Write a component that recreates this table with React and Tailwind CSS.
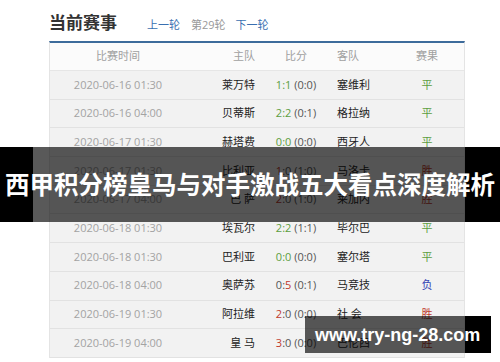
import React from "react";

const rows = [
  { time: "2020-06-16 01:30", home: "莱万特", s: ["1", "1"], half: "(0:0)", away: "塞维利", res: "平" },
  { time: "2020-06-16 04:00", home: "贝蒂斯", s: ["2", "2"], half: "(0:1)", away: "格拉纳", res: "平" },
  { time: "2020-06-17 01:30", home: "赫塔费", s: ["0", "0"], half: "(0:0)", away: "西牙人", res: "平" },
  { time: "2020-06-17 01:30", home: "比利亚", s: ["1", "0"], half: "(1:0)", away: "马洛卡", res: "胜" },
  { time: "2020-06-17 04:00", home: "巴 萨", s: ["2", "0"], half: "(1:0)", away: "莱加内", res: "胜" },
  { time: "2020-06-18 01:30", home: "埃瓦尔", s: ["2", "2"], half: "(1:1)", away: "毕尔巴", res: "平" },
  { time: "2020-06-18 01:30", home: "巴利亚", s: ["0", "0"], half: "(0:0)", away: "塞尔塔", res: "平" },
  { time: "2020-06-18 04:00", home: "奥萨苏", s: ["0", "5"], half: "(0:1)", away: "马竞技", res: "负" },
  { time: "2020-06-19 01:30", home: "阿拉维", s: ["2", "0"], half: "(0:0)", away: "社 会", res: "胜" },
  { time: "2020-06-19 04:00", home: "皇 马", s: ["3", "0"], half: "(0:0)", away: "巴伦西", res: "胜" },
];

const resColor = { 平: "text-[#5c9e3e]", 胜: "text-[#c0392b]", 负: "text-[#3546b5]" };

function Score({ s, half }) {
  const [a, b] = s;
  const draw = a === b;
  const win = Number(a) > Number(b);
  return (
    <span className="whitespace-pre">
      {draw ? (
        <span className="text-[#5c9e3e]">{a}:{b}</span>
      ) : (
        <>
          <span className={win ? "text-[#c0392b]" : "text-[#555]"}>{a}</span>
          <span className="text-[#555]">:</span>
          <span className={win ? "text-[#555]" : "text-[#c0392b]"}>{b}</span>
        </>
      )}
      <span className="text-[#555]"> {half}</span>
    </span>
  );
}

const cols = "grid grid-cols-[136px_73px_74px_60px_68px] items-center";

export default function App() {
  return (
    <div className="relative w-[500px] h-[362px] bg-white overflow-hidden font-['Open_Sans','Noto_Sans_CJK_SC',sans-serif]">
      <div className="pl-[49px] h-[41px] pt-[9px] flex items-baseline">
        <span className="text-[17px] font-bold text-[#333] font-['Noto_Sans_CJK_SC',sans-serif]">当前赛事</span>
        <span className="ml-[30px] text-[11px] text-[#3a6fb0] font-['Noto_Sans_CJK_SC',sans-serif]">上一轮</span>
        <span className="ml-[11px] text-[11px] text-[#999]">第29轮</span>
        <span className="ml-[10px] text-[11px] text-[#3a6fb0] font-['Noto_Sans_CJK_SC',sans-serif]">下一轮</span>
      </div>

      <div className="ml-[49px] w-[416px] border-t-2 border-t-[#3d6b9b] border-x border-x-[#e4e4e4] text-[11px]">
        <div className={`${cols} h-[28px] bg-[#fbfbfb] text-[#a0a0a0] border-b border-[#e6e6e6]`}>
          <span className="text-center">比赛时间</span>
          <span className="text-right pr-[4px]">主队</span>
          <span className="text-center">比分</span>
          <span className="pl-[4px]">客队</span>
          <span className="text-center">赛果</span>
        </div>
        {rows.map((r, i) => (
          <div key={i} className={`${cols} h-[28.7px] bg-[#f2f2f2] border-b border-[#e2e2e2]`}>
            <span className="text-center text-[#a3a3a3]">{r.time}</span>
            <span className="text-right pr-[4px] text-[#222] whitespace-pre">{r.home}</span>
            <span className="text-center"><Score s={r.s} half={r.half} /></span>
            <span className="pl-[4px] text-[#222] whitespace-pre">{r.away}</span>
            <span className={`text-center ${resColor[r.res]}`}>{r.res}</span>
          </div>
        ))}
      </div>

      {/* title band */}
      <div className="absolute left-0 top-[147px] w-[500px] h-[75px] flex">
        <div className="w-[33px] bg-black" />
        <div className="w-[432px] bg-black/65" />
        <div className="flex-1 bg-black" />
        <div className="absolute inset-0 flex items-center justify-center">
          <span className="text-white font-bold text-[24.5px] leading-none whitespace-nowrap font-['Noto_Sans_CJK_SC',sans-serif]">
            西甲积分榜皇马与对手激战五大看点深度解析
          </span>
        </div>
      </div>

      {/* watermark */}
      <div className="absolute left-[305px] top-[316px] w-[186px] h-[37px] flex">
        <div className="w-[160px] bg-black/65" />
        <div className="flex-1 bg-black" />
        <div className="absolute inset-0 flex items-center pl-[10px]">
          <span className="text-white font-bold text-[18px] leading-none font-['Liberation_Sans',sans-serif]">www.try-ng-28.com</span>
        </div>
      </div>
    </div>
  );
}
